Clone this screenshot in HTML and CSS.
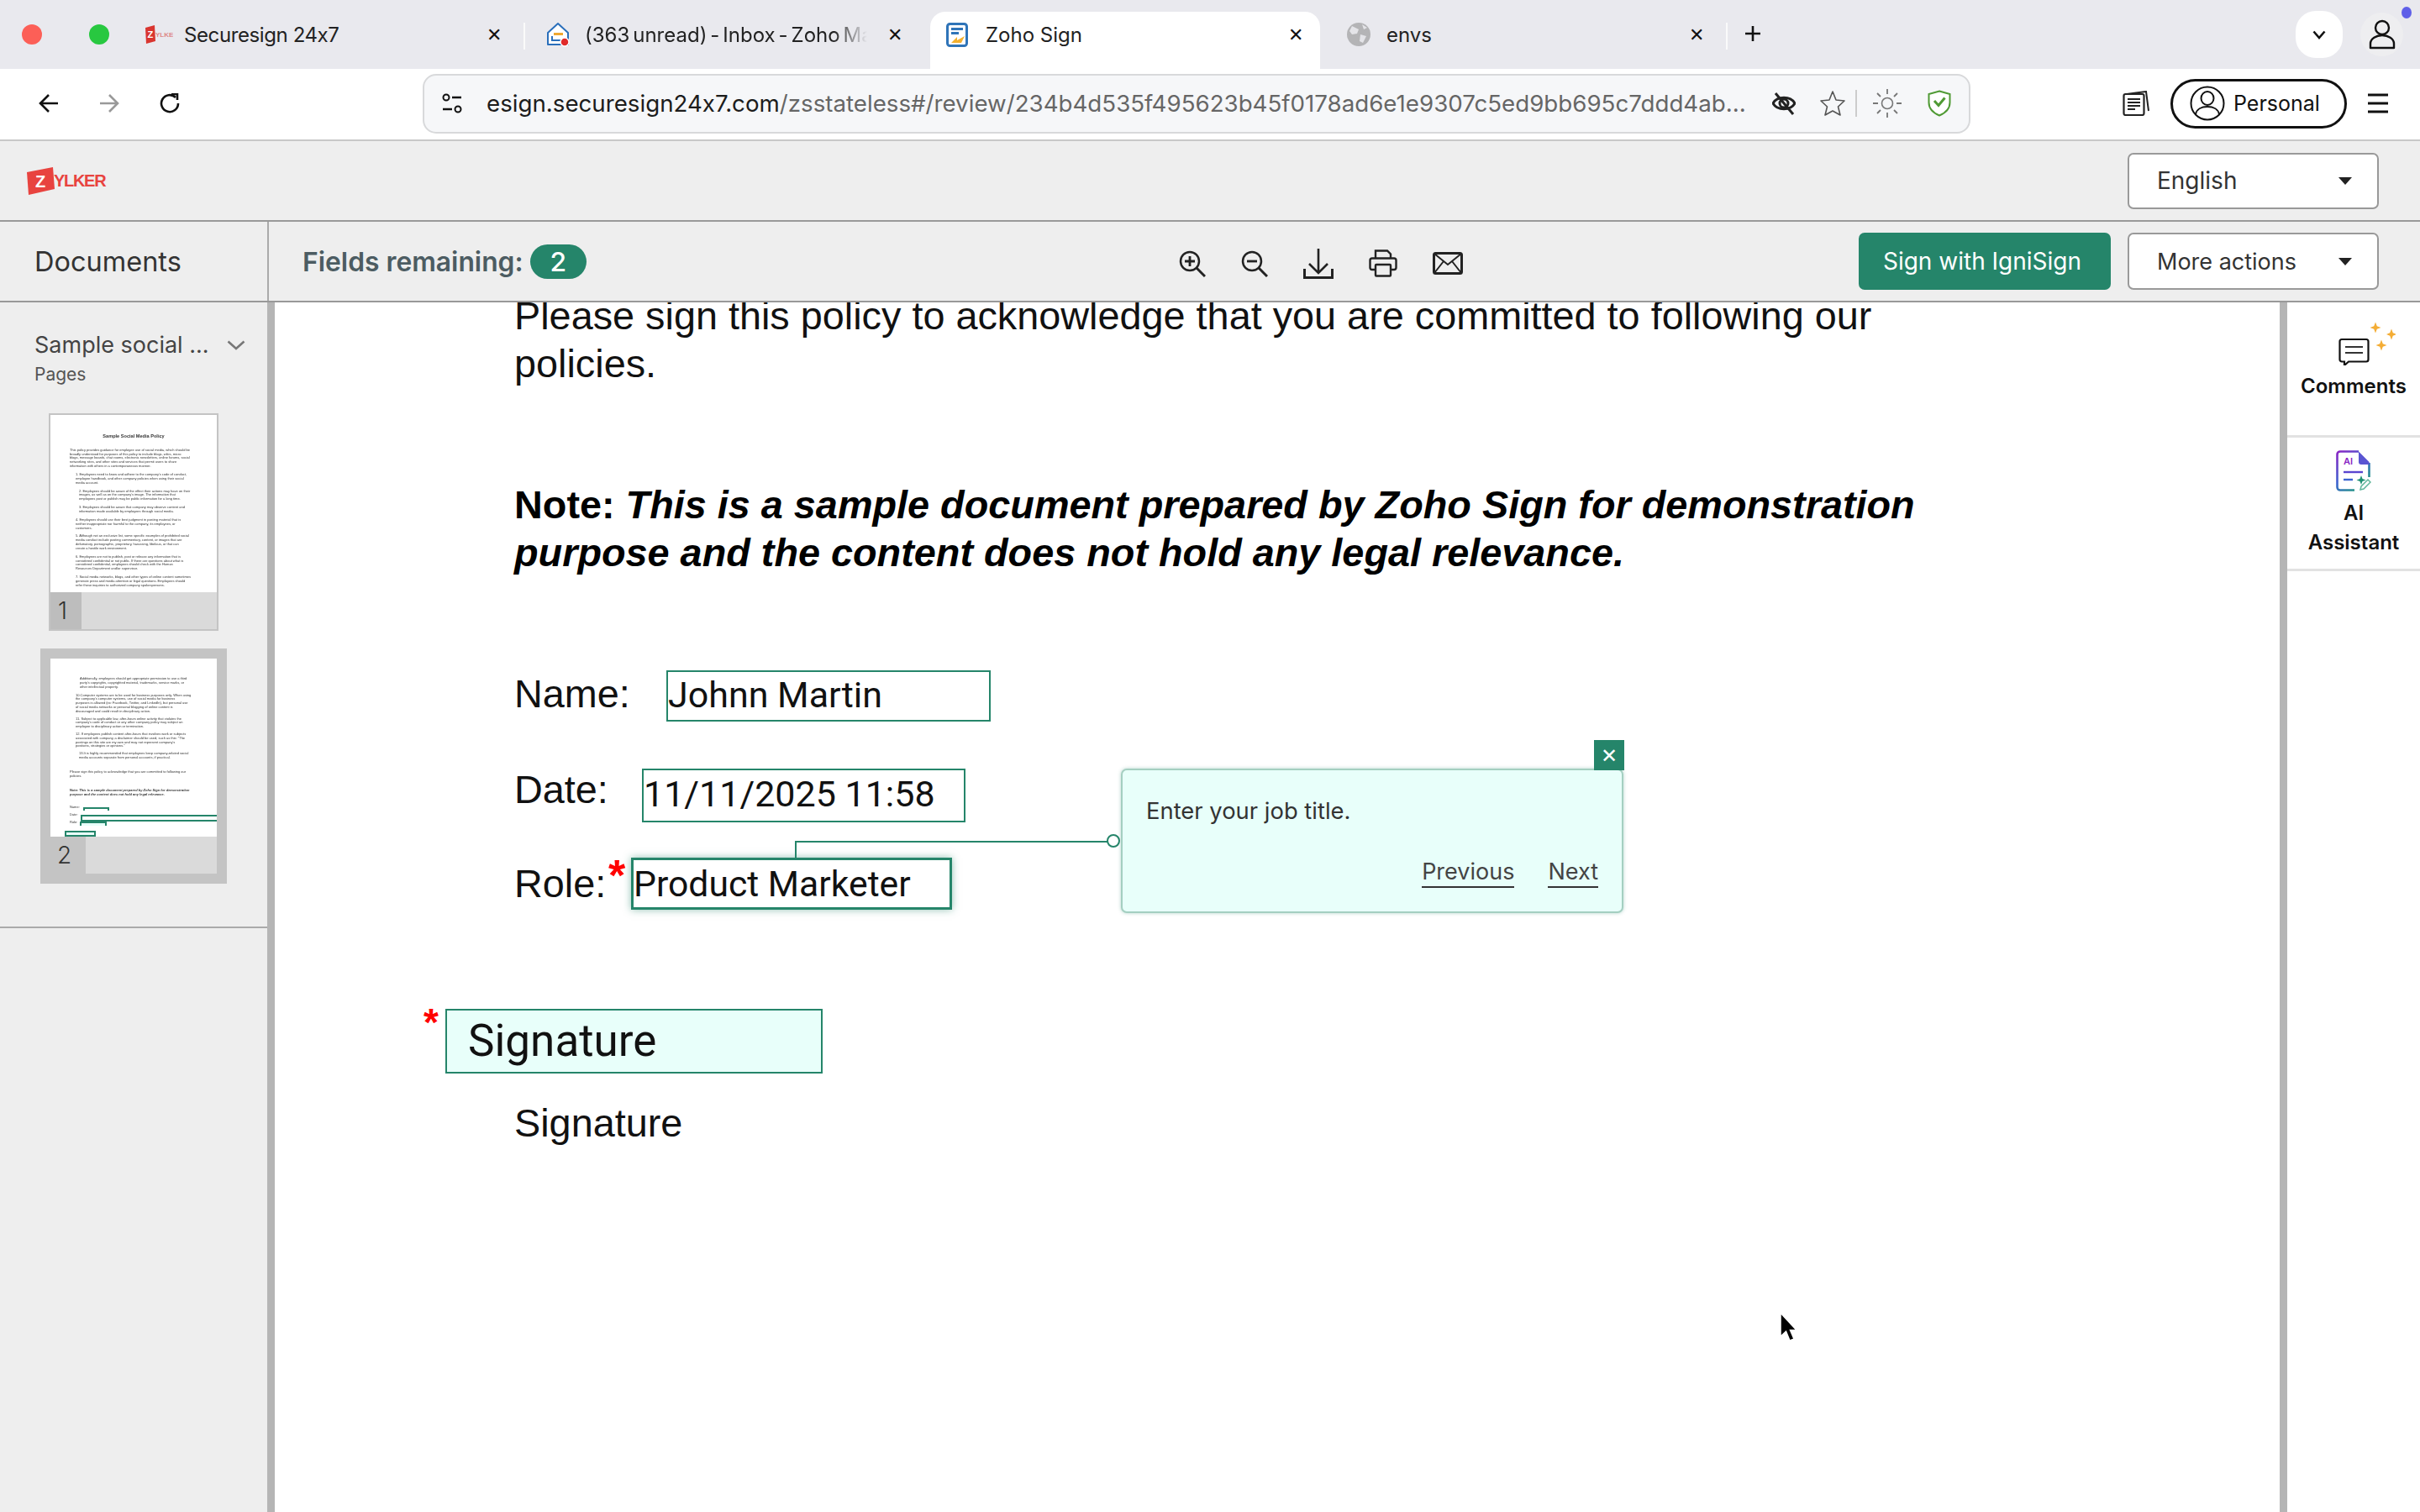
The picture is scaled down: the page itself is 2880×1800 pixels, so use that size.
FILE: index.html
```
<!DOCTYPE html>
<html lang="en">
<head>
  <meta charset="UTF-8">
  <meta name="viewport" content="width=device-width, initial-scale=1.0">
  <title>Zoho Sign</title>
  <link rel="stylesheet" href="styles.css">
</head>
<body>

  <!-- browser tabs -->
  <div class="tabstrip">
    <div class="lights">
      <span class="light red"></span>
      <span class="light green"></span>
    </div>
    <div class="tabs">
      <div class="tab sep">
        <span class="favicon">
          <svg width="34" height="22" viewBox="0 0 34 22"><path d="M1 3 L12 0 L13 19 L2 22 Z" fill="#d9352f"/><text x="3.5" y="15" font-size="11" font-weight="700" font-family="Liberation Sans" fill="#fff">Z</text><text x="13" y="14" font-size="8" font-weight="700" font-family="Liberation Sans" fill="#d88">YLKER</text></svg>
        </span>
        <span class="tab-title narrow">Securesign 24x7</span>
        <span class="tab-close">✕</span>
      </div>
      <div class="tab">
        <span class="favicon">
          <svg width="30" height="30" viewBox="0 0 30 30"><path d="M15 2 L27 13 V27 H3 V13 Z" fill="#fff" stroke="#2a6fbb" stroke-width="2" stroke-linejoin="round"/><rect x="10" y="13" width="11" height="3" fill="#f0a830"/><path d="M8 17v5h10" fill="none" stroke="#2a6fbb" stroke-width="2"/><circle cx="23" cy="24" r="5" fill="#e02b2b" stroke="#fff" stroke-width="1.5"/></svg>
        </span>
        <span class="tab-title fade">(363 unread) - Inbox - Zoho Mail</span>
        <span class="tab-close">✕</span>
      </div>
      <div class="tab active">
        <span class="favicon">
          <svg width="26" height="29" viewBox="0 0 26 29"><rect x="1.5" y="1.5" width="23" height="26" rx="3" fill="#fff" stroke="#2f74b8" stroke-width="3"/><rect x="6" y="6" width="14" height="3" fill="#2f74b8"/><rect x="6" y="11" width="9" height="3" fill="#2f74b8"/><path d="M6 24 L13 17 L13 21 L22 16 L18 24 Z" fill="#f2b02f"/></svg>
        </span>
        <span class="tab-title">Zoho Sign</span>
        <span class="tab-close">✕</span>
      </div>
      <div class="tab sep">
        <span class="favicon">
          <svg width="28" height="28" viewBox="0 0 28 28"><circle cx="14" cy="14" r="14" fill="#b4b4b6"/><path d="M6 4 L14 8 L12 13 L6 14 L3 10 Z M16 14 L23 16 L19 24 L15 22 Z M18 2 L24 6 L20 8 Z" fill="#e4e4e8"/></svg>
        </span>
        <span class="tab-title">envs</span>
        <span class="tab-close">✕</span>
      </div>
    </div>
    <svg class="new-tab" width="20" height="20" viewBox="0 0 20 20"><path d="M10 1V19M1 10H19" stroke="#111" stroke-width="2.6"/></svg>
    <div class="strip-right">
      <span class="tab-list">
        <svg width="16" height="11" viewBox="0 0 16 11"><path d="M1.5 1.5L8 9L14.5 1.5" fill="none" stroke="#111" stroke-width="2.6"/></svg>
      </span>
      <span class="account">
        <svg width="32" height="36" viewBox="0 0 32 36"><circle cx="16" cy="10" r="8" fill="none" stroke="#111" stroke-width="2.4"/><path d="M2 34 V29 C2 23 9 19 16 19 C23 19 30 23 30 29 V34 Z" fill="none" stroke="#111" stroke-width="2.4" stroke-linejoin="round"/></svg>
        <i class="account-dot"></i>
      </span>
    </div>
  </div>

  <!-- address bar -->
  <div class="toolbar">
    <svg class="nav-icon" width="24" height="24" viewBox="0 0 24 24"><path d="M23 12H3M12 2L2 12L12 22" fill="none" stroke="#111" stroke-width="2.6"/></svg>
    <svg class="nav-icon" width="24" height="24" viewBox="0 0 24 24"><path d="M1 12H21M12 2L22 12L12 22" fill="none" stroke="#999" stroke-width="2.6"/></svg>
    <svg class="nav-icon" width="24" height="24" viewBox="0 0 24 24"><path d="M19 5A10 10 0 1 0 22 12" fill="none" stroke="#111" stroke-width="2.6"/><path d="M14 1H21V8" fill="none" stroke="#111" stroke-width="2.6"/></svg>
    <div class="address">
      <svg class="tune" width="24" height="24" viewBox="0 0 24 24"><circle cx="5" cy="5" r="3.5" fill="none" stroke="#111" stroke-width="2"/><path d="M12 5H23M1 19H12" stroke="#111" stroke-width="2.4"/><circle cx="19" cy="19" r="3.5" fill="none" stroke="#111" stroke-width="2"/></svg>
      <span class="url">esign.securesign24x7.com<span class="url-path">/zsstateless#/review/234b4d535f495623b45f0178ad6e1e9307c5ed9bb695c7ddd4ab...</span></span>
      <svg class="eye" width="28" height="28" viewBox="0 0 28 28"><path d="M1 14C6 5 22 5 27 14C22 23 6 23 1 14Z" fill="none" stroke="#222" stroke-width="3"/><circle cx="14" cy="14" r="5" fill="none" stroke="#222" stroke-width="3"/><path d="M4 2L25 27" stroke="#222" stroke-width="3"/></svg>
      <svg class="star" width="32" height="32" viewBox="0 0 32 32"><path d="M16 2L20 12L30 13L22.5 20L25 30L16 25L7 30L9.5 20L2 13L12 12Z" fill="none" stroke="#555" stroke-width="1.6" stroke-linejoin="round"/></svg>
      <i class="address-sep"></i>
      <svg class="sun" width="36" height="36" viewBox="0 0 36 36"><circle cx="18" cy="18" r="6.5" fill="none" stroke="#777" stroke-width="1.6"/><path d="M18 1V7M18 29V35M1 18H7M29 18H35M6 6L10 10M26 26L30 30M6 30L10 26M26 10L30 6" stroke="#777" stroke-width="1.8"/></svg>
      <svg class="shield" width="28" height="32" viewBox="0 0 28 32"><path d="M14 1.5L26.5 5V15C26.5 23 20 28 14 30.5C8 28 1.5 23 1.5 15V5Z" fill="#fff" stroke="#4f9a34" stroke-width="2"/><path d="M8 13L13 18.5L20.5 9.5" fill="none" stroke="#4f9a34" stroke-width="3"/></svg>
    </div>
    <svg class="docs-icon" width="32" height="30" viewBox="0 0 32 30"><path d="M5 4L28 1L31 24" fill="none" stroke="#222" stroke-width="2"/><rect x="1.5" y="4" width="24" height="25" rx="2" fill="#fff" stroke="#222" stroke-width="2.2"/><path d="M6 10H21M6 14H21M6 18H21M6 22H15" stroke="#222" stroke-width="2"/></svg>
    <div class="profile">
      <svg width="42" height="42" viewBox="0 0 42 42"><circle cx="21" cy="21" r="19.5" fill="none" stroke="#111" stroke-width="2"/><ellipse cx="21" cy="15" rx="7.5" ry="8" fill="none" stroke="#111" stroke-width="2"/><path d="M7 34C8 28 14 25 21 25C28 25 34 28 35 34" fill="none" stroke="#111" stroke-width="2"/></svg>
      <span>Personal</span>
    </div>
    <svg class="hamburger" width="24" height="24" viewBox="0 0 24 24"><path d="M0 2H24M0 12H24M0 22H24" stroke="#111" stroke-width="3"/></svg>
  </div>

  <!-- app header -->
  <div class="brandbar">
    <svg class="logo" width="96" height="34" viewBox="0 0 96 34"><path d="M0 6L31 0L33 26L2 33Z" fill="#e8433f"/><text x="10" y="24" font-size="20" font-weight="700" font-family="Liberation Sans" fill="#fff">Z</text><text x="32" y="23" font-size="20" font-weight="700" font-family="Liberation Sans" letter-spacing="-1.3" fill="#e8433f">YLKER</text></svg>
    <div class="select">
      <span>English</span>
      <i class="caret"></i>
    </div>
  </div>

  <div class="actionbar">
    <div class="docs-title">Documents</div>
    <div class="fields-left">Fields remaining: <span class="badge">2</span></div>
    <div class="doc-tools">
      <svg width="32" height="32" viewBox="0 0 32 32"><circle cx="13" cy="13" r="11" fill="none" stroke="#222" stroke-width="2.5"/><path d="M21 21L31 31" stroke="#222" stroke-width="3"/><path d="M13 7V19M7 13H19" stroke="#222" stroke-width="2.8"/></svg>
      <svg width="32" height="32" viewBox="0 0 32 32"><circle cx="13" cy="13" r="11" fill="none" stroke="#222" stroke-width="2.5"/><path d="M21 21L31 31" stroke="#222" stroke-width="3"/><path d="M7 13H19" stroke="#222" stroke-width="2.8"/></svg>
      <svg width="36" height="36" viewBox="0 0 36 36"><path d="M18 0V28M7 18L18 29L29 18" fill="none" stroke="#222" stroke-width="2.6"/><path d="M1.5 24V34.5H34.5V24" fill="none" stroke="#222" stroke-width="3"/></svg>
      <svg width="34" height="33" viewBox="0 0 34 33"><path d="M8 11V1.5H22L26 5.5V11" fill="none" stroke="#222" stroke-width="2.4"/><path d="M8 24H4C2.5 24 1.5 23 1.5 21.5V13C1.5 11.5 2.5 10.5 4 10.5H30C31.5 10.5 32.5 11.5 32.5 13V21.5C32.5 23 31.5 24 30 24H26" fill="none" stroke="#222" stroke-width="2.4"/><rect x="8" y="18" width="18" height="13.5" rx="1" fill="none" stroke="#222" stroke-width="2.4"/></svg>
      <svg width="36" height="27" viewBox="0 0 36 27"><rect x="1.5" y="1.5" width="33" height="24" rx="2" fill="none" stroke="#222" stroke-width="3"/><path d="M2 2L18 15L34 2M2 25L13 11M34 25L23 11" fill="none" stroke="#222" stroke-width="2"/></svg>
    </div>
    <div class="sign-btn">Sign with IgniSign</div>
    <div class="select more">
      <span>More actions</span>
      <i class="caret"></i>
    </div>
  </div>

  <div class="workspace">
    <aside class="sidebar">
      <div class="doc-head">
        <div class="doc-name">
          <span>Sample social ...</span>
          <svg width="22" height="12" viewBox="0 0 22 12"><path d="M1.5 1.5L11 10L20.5 1.5" fill="none" stroke="#777" stroke-width="2.6"/></svg>
        </div>
        <div class="pages-label">Pages</div>
      </div>

      <div class="thumb">
        <div class="thumb-page">
          <div class="thumb-title">Sample Social Media Policy</div>
          <p class="t0">This policy provides guidance for employee use of social media, which should be<br>broadly understood for purposes of this policy to include blogs, wikis, micro<br>blogs, message boards, chat rooms, electronic newsletters, online forums, social<br>networking sites, and other sites and services that permit users to share<br>information with others in a contemporaneous manner.</p>
          <p class="t1">1. Employees need to know and adhere to the company's code of conduct,<br>employee handbook, and other company policies when using their social<br>media account.</p>
          <p class="t2">2. Employees should be aware of the effect their actions may have on their<br>images, as well as on the company's image. The information that<br>employees post or publish may be public information for a long time.</p>
          <p class="t2">3. Employees should be aware that company may observe content and<br>information made available by employees through social media.</p>
          <p class="t1">4. Employees should use their best judgment in posting material that is<br>neither inappropriate nor harmful to the company, its employees, or<br>customers.</p>
          <p class="t1">5. Although not an exclusive list, some specific examples of prohibited social<br>media conduct include posting commentary, content, or images that are<br>defamatory, pornographic, proprietary, harassing, libelous, or that can<br>create a hostile work environment.</p>
          <p class="t1">6. Employees are not to publish, post or release any information that is<br>considered confidential or not public. If there are questions about what is<br>considered confidential, employees should check with the Human<br>Resources Department and/or supervisor.</p>
          <p class="t1">7. Social media networks, blogs, and other types of online content sometimes<br>generate press and media attention or legal questions. Employees should<br>refer these inquiries to authorized company spokespersons.</p>
        </div>
        <div class="thumb-foot">
          <span class="thumb-num">1</span>
          <span class="thumb-rest"></span>
        </div>
      </div>

      <div class="thumb current">
        <div class="thumb-page">
          <p class="t3">Additionally, employees should get appropriate permission to use a third<br>party's copyrights, copyrighted material, trademarks, service marks, or<br>other intellectual property.</p>
          <p class="t1 tight">10.Computer systems are to be used for business purposes only. When using<br>the company's computer systems, use of social media for business<br>purposes is allowed (ex: Facebook, Twitter, and LinkedIn), but personal use<br>of social media networks or personal blogging of online content is<br>discouraged and could result in disciplinary action.</p>
          <p class="t1 tight">11. Subject to applicable law, after-hours online activity that violates the<br>company's code of conduct or any other company policy may subject an<br>employee to disciplinary action or termination.</p>
          <p class="t1 tight">12. If employees publish content after-hours that involves work or subjects<br>associated with company, a disclaimer should be used, such as this: "The<br>postings on this site are my own and may not represent company's<br>positions, strategies or opinions."</p>
          <p class="t2 tight">13.It is highly recommended that employees keep company-related social<br>media accounts separate from personal accounts, if practical.</p>
          <p class="t0 gap">Please sign this policy to acknowledge that you are committed to following our<br>policies.</p>
          <p class="t0 gap note"><b>Note: <i>This is a sample document prepared by Zoho Sign for demonstration<br>purpose and the content does not hold any legal relevance.</i></b></p>
          <p class="t0 mini-form">Name:<br><br>Date:<br><br>Role:</p>
          <i class="mini-field f1"></i>
          <i class="mini-field f2"></i>
          <i class="mini-field f3"></i>
          <i class="mini-field f4"></i>
        </div>
        <div class="thumb-foot">
          <span class="thumb-num">2</span>
          <span class="thumb-rest"></span>
        </div>
      </div>
    </aside>

    <i class="vbar"></i>

    <main class="page">
      <p class="pdf-text">Please sign this policy to acknowledge that you are committed to following our<br>policies.</p>
      <p class="pdf-text pdf-note"><b>Note: <i>This is a sample document prepared by Zoho Sign for demonstration<br>purpose and the content does not hold any legal relevance.</i></b></p>
      <p class="pdf-text label-name">Name:</p>
      <p class="pdf-text label-date">Date:</p>
      <p class="pdf-text label-role">Role:</p>
      <p class="pdf-text label-sign">Signature</p>

      <!-- fields sit on top of the pdf page -->
      <div class="field name-field">Johnn Martin</div>
      <div class="field date-field">11/11/2025 11:58</div>
      <div class="field role-field">Product Marketer</div>
      <span class="req role-req">*</span>
      <div class="connector"></div>
      <i class="connector-dot"></i>
      <div class="tip">
        <span class="tip-close">✕</span>
        <div class="tip-text">Enter your job title.</div>
        <div class="tip-nav">
          <a>Previous</a>
          <a>Next</a>
        </div>
      </div>
      <span class="req sign-req">*</span>
      <div class="field sign-field">Signature</div>

      <svg class="cursor" width="22" height="38" viewBox="0 0 22 38"><path d="M2 2V30L8.5 24L13 35L18 33L13.5 22.5H21Z" fill="#000" stroke="#fff" stroke-width="1.5"/></svg>
    </main>

    <i class="vbar"></i>

    <aside class="rightbar">
      <div class="side-item comments">
        <svg width="70" height="52" viewBox="0 -8 70 52"><path d="M6 13H35C36.5 13 37.5 14 37.5 15.5V37C37.5 38.5 36.5 39.5 35 39.5H14L9 44V39.5H6C4.5 39.5 3.5 38.5 3.5 37V15.5C3.5 14 4.5 13 6 13Z" fill="none" stroke="#111" stroke-width="2.2"/><path d="M10 22H31M10 29H31" stroke="#333" stroke-width="2"/><path d="M46 -7.5L47.8 -2.8L52.5 -1L47.8 .8L46 5.5L44.2 .8L39.5 -1L44.2 -2.8Z M65 .5L66.8 5.2L71 7L66.8 8.8L65 13.5L63.2 8.8L59 7L63.2 5.2Z M53 13.5L54.8 18.2L59.5 20L54.8 21.8L53 26.5L51.2 21.8L46.5 20L51.2 18.2Z" fill="#f4ad35"/></svg>
        <span>Comments</span>
      </div>
      <div class="side-item assistant">
        <svg width="42" height="50" viewBox="0 0 42 50">
          <defs>
            <linearGradient id="ai-grad" x1="0" y1="0" x2="0.7" y2="1">
              <stop offset="0" stop-color="#8a25c4"/>
              <stop offset="0.55" stop-color="#3c64d0"/>
              <stop offset="1" stop-color="#1f9a7c"/>
            </linearGradient>
          </defs>
          <path d="M27 1.5H5C3 1.5 1.5 3 1.5 5V44C1.5 46 3 47.5 5 47.5H22M39.5 32V15" fill="none" stroke="url(#ai-grad)" stroke-width="2.6"/>
          <path d="M27 1.5L39.5 14V17H30C28 17 27 16 27 14Z" fill="#5a55d2"/>
          <text x="9" y="17" font-size="11" font-family="Inter" fill="#8a25c4">AI</text>
          <path d="M9 26H32" stroke="#5a45d0" stroke-width="2.4"/>
          <path d="M9 35H20" stroke="#3c64d0" stroke-width="2.4"/>
          <path d="M30 30L31.5 34L35.5 35.5L31.5 37L30 41L28.5 37L24.5 35.5L28.5 34Z" fill="#1f8f72"/>
          <path d="M29 47L30 43L38 35L41 38L33 46Z" fill="#fff" stroke="#5fb59b" stroke-width="1.5"/>
        </svg>
        <span class="ai">AI</span>
        <span>Assistant</span>
      </div>
    </aside>
  </div>

</body>
</html>
```
FILE: styles.css
```
* {
  margin: 0;
  padding: 0;
  box-sizing: border-box;
}

body {
  width: 2880px;
  height: 1800px;
  overflow: hidden;
  background: #fff;
  font-family: 'Inter', sans-serif;
  font-feature-settings: 'calt' 0;
  color: #222;
}

svg {
  display: block;
  flex: none;
}

/* tab strip */
.tabstrip {
  height: 82px;
  background: #e9e9ee;
  display: flex;
  align-items: flex-end;
  position: relative;
}

.lights {
  width: 153px;
  height: 82px;
  padding-left: 26px;
  display: flex;
  align-items: center;
  gap: 56px;
  flex: none;
}

.light {
  width: 24px;
  height: 24px;
  border-radius: 50%;
}

.light.red { background: #fc5f57; }
.light.green { background: #28c840; }

.tabs {
  display: flex;
  gap: 13px;
  flex: none;
}

.tab {
  width: 464px;
  height: 68px;
  padding: 0 20px 14px 19px;
  display: flex;
  align-items: center;
  position: relative;
  font-size: 24px;
  color: #222;
}

.tab.sep::after {
  content: '';
  position: absolute;
  right: -8px;
  top: 13px;
  width: 2px;
  height: 32px;
  background: #fafafa;
}

.tab.active {
  background: #fff;
  border-radius: 18px 18px 0 0;
}

.favicon {
  width: 47px;
  display: flex;
  flex: none;
}

.tab-title {
  flex: 1;
  white-space: nowrap;
  overflow: hidden;
}

.tab-title.narrow {
  letter-spacing: -0.4px;
}

.tab-title.fade {
  flex: none;
  width: 336px;
  word-spacing: -2.8px;
  -webkit-mask-image: linear-gradient(to right, #000 88%, transparent);
  mask-image: linear-gradient(to right, #000 88%, transparent);
}

.tab-close {
  margin-left: auto;
  font-size: 22px;
  color: #111;
  line-height: 1;
}

.new-tab {
  margin: 0 0 32px 28px;
}

.strip-right {
  margin-left: auto;
  height: 82px;
  padding-right: 20px;
  display: flex;
  align-items: center;
  gap: 21px;
}

.tab-list {
  width: 56px;
  height: 56px;
  border-radius: 24px;
  background: #fff;
  display: flex;
  align-items: center;
  justify-content: center;
}

.account {
  width: 51px;
  height: 52px;
  border-radius: 50%;
  background: #eeeef0;
  display: flex;
  align-items: center;
  justify-content: center;
  position: relative;
}

.account-dot {
  position: absolute;
  top: -7px;
  right: -10px;
  width: 12px;
  height: 14px;
  border-radius: 50%;
  background: #5f5fe8;
}

/* address bar */
.toolbar {
  height: 86px;
  padding: 0 38px 2px 46px;
  background: #fff;
  border-bottom: 2px solid #c8c8c8;
  border-radius: 14px 14px 0 0;
  display: flex;
  align-items: center;
}

.nav-icon {
  margin-right: 48px;
}

.address {
  width: 1842px;
  height: 71px;
  margin-left: 241px;
  padding: 0 21px;
  background: #f6f7f9;
  border: 2px solid #d8d9db;
  border-radius: 16px;
  display: flex;
  align-items: center;
}

.tune {
  margin-right: 29px;
}

.url {
  flex: 1;
  min-width: 0;
  font-size: 27.7px;
  color: #1c1c1c;
  white-space: nowrap;
  overflow: hidden;
}

.url-path {
  color: #666;
}

.star { margin-left: 28px; }
.sun { margin-left: 18px; }
.shield { margin-left: 30px; }

.address-sep {
  width: 2px;
  height: 32px;
  margin-left: 11px;
  background: #ccc;
}

.docs-icon {
  margin-left: 181px;
}

.profile {
  width: 210px;
  height: 59px;
  margin-left: 25px;
  padding-left: 20px;
  border: 3px solid #111;
  border-radius: 30px;
  display: flex;
  align-items: center;
  gap: 10px;
  font-size: 25px;
  color: #111;
}

.hamburger {
  margin-left: 25px;
}

/* app header */
.brandbar {
  height: 96px;
  padding: 0 49px 0 32px;
  background: #eee;
  border-bottom: 2px solid #999;
  display: flex;
  align-items: center;
  justify-content: space-between;
}

.logo {
  margin-top: 2px;
}

.select {
  width: 299px;
  height: 67px;
  padding: 0 30px 0 33px;
  background: #fff;
  border: 2px solid #999;
  border-radius: 7px;
  display: flex;
  align-items: center;
  justify-content: space-between;
  font-size: 28px;
  color: #333;
}

.caret {
  width: 0;
  height: 0;
  border-left: 8px solid transparent;
  border-right: 8px solid transparent;
  border-top: 9px solid #222;
}

.actionbar {
  height: 96px;
  padding-right: 49px;
  background: #eee;
  border-bottom: 2px solid #999;
  display: flex;
  align-items: center;
}

.docs-title {
  width: 320px;
  height: 94px;
  padding-left: 41px;
  border-right: 2px solid #aaa;
  display: flex;
  align-items: center;
  font-size: 32.5px;
  color: #333;
  flex: none;
}

.fields-left {
  margin-left: 40px;
  display: flex;
  align-items: center;
  font-size: 31.8px;
  font-weight: 600;
  color: #4c5c62;
  white-space: pre;
  width: 337px;
}

.badge {
  width: 67px;
  height: 41px;
  border-radius: 21px;
  background: #25856a;
  color: #fff;
  display: flex;
  align-items: center;
  justify-content: center;
  flex: none;
  font-weight: 500;
}

.doc-tools {
  margin: 5px 0 0 706px;
  display: flex;
  align-items: center;
  gap: 42px;
}

.sign-btn {
  width: 300px;
  height: 68px;
  margin-left: auto;
  margin-right: 20px;
  padding-right: 6px;
  border-radius: 7px;
  background: #25856a;
  color: #fff;
  display: flex;
  align-items: center;
  justify-content: center;
  font-size: 28px;
}

.select.more {
  height: 68px;
  font-size: 27px;
}

/* main area */
.workspace {
  height: 1440px;
  display: flex;
}

.vbar {
  width: 9px;
  background: #b5b5b5;
  flex: none;
}

.sidebar {
  width: 318px;
  flex: none;
  background: #eee;
  display: flex;
  flex-direction: column;
  align-items: flex-start;
}

.doc-head {
  width: 100%;
  padding: 34px 26px 0 41px;
  height: 132px;
}

.doc-name {
  display: flex;
  align-items: center;
  justify-content: space-between;
  font-size: 27px;
  color: #444;
  line-height: 34px;
}

.pages-label {
  margin-top: 5px;
  font-size: 21px;
  color: #555;
}

.thumb {
  width: 202px;
  margin-left: 58px;
  padding: 2px;
  background: #c4c4c4;
}

.thumb.current {
  width: 222px;
  height: 280px;
  margin: 21px 0 0 48px;
  padding: 12px;
}

.thumb-page {
  height: 211px;
  padding-top: 23px;
  background: #fff;
  position: relative;
  font-family: 'Liberation Sans', sans-serif;
  font-size: 4px;
  line-height: 4.8px;
  color: #333;
  white-space: nowrap;
  filter: blur(0.3px);
}

.thumb.current .thumb-page {
  height: 212px;
  padding-top: 22px;
}

.thumb-title {
  text-align: center;
  font-size: 5.6px;
  font-weight: 700;
  margin-bottom: 12px;
}

.thumb-page p {
  margin-bottom: 5.2px;
}

.t0 { padding-left: 23px; }
.t1 { padding-left: 30px; }
.t2 { padding-left: 34px; }
.t3 { padding-left: 35px; }
.thumb-page p.tight { margin-bottom: 4px; }
.thumb-page p.gap { margin-top: 12px; }
.thumb-page p.note { margin-top: 13px; }
.thumb-page p.mini-form { margin-top: 10px; line-height: 4.4px; }

.mini-field {
  position: absolute;
  border: 2px solid #25856a;
  background: #fff;
}

.mini-field.f1 { left: 39px; top: 177px; width: 31px; height: 4px; border-bottom: 0; }
.mini-field.f2 { left: 36px; top: 186px; width: 162px; height: 8px; border-right: 0; }
.mini-field.f3 { left: 35px; top: 194px; width: 32px; height: 5px; border-bottom: 0; background: #e8fffa; }
.mini-field.f4 { left: 17px; top: 205px; width: 37px; height: 7px; background: #e8fffa; }

.thumb-foot {
  height: 44px;
  display: flex;
}

.thumb-num {
  width: 37px;
  background: #bdbdbd;
  display: flex;
  align-items: center;
  padding-left: 9px;
  font-size: 28px;
  font-weight: 300;
  color: #333;
}

.thumb-rest {
  flex: 1;
  background: #dadada;
}

.thumb.current .thumb-num {
  width: 42px;
  background: none;
  padding-left: 8px;
}

.sidebar::after {
  content: '';
  width: 100%;
  height: 2px;
  margin-top: 51px;
  background: #aaa;
}

/* document page */
.page {
  flex: 1;
  min-width: 0;
  position: relative;
  overflow: hidden;
  background: #fff;
  padding: 0 0 0 285px;
}

.pdf-text {
  font-family: 'Liberation Sans', sans-serif;
  font-size: 46.8px;
  line-height: 57px;
  color: #111;
  white-space: nowrap;
}

.pdf-text:first-child { margin-top: -12px; }
.pdf-note { margin-top: 110.5px; color: #000; }
.label-name { margin-top: 111px; }
.label-date { margin-top: 57px; }
.label-role { margin-top: 55px; }
.label-sign { margin-top: 228px; }

.field {
  position: absolute;
  border: 2px solid #25856a;
  background: #fff;
  display: flex;
  align-items: center;
  padding: 0 0 4px 0;
  font-family: 'Roboto', sans-serif;
  font-size: 43px;
  color: #111;
  white-space: nowrap;
}

.name-field { left: 466px; top: 438px; width: 386px; height: 61px; }
.date-field { left: 437px; top: 555px; width: 385px; height: 64px; }

.role-field {
  left: 424px;
  top: 661px;
  width: 382px;
  height: 62px;
  padding-bottom: 0;
  border-width: 3px;
  font-size: 42.7px;
  box-shadow: 0 0 9px rgba(37, 133, 106, .5);
}

.sign-field {
  left: 203px;
  top: 841px;
  width: 449px;
  height: 77px;
  padding: 0 0 1px 25px;
  background: #e8fffa;
  font-size: 53px;
}

.req {
  position: absolute;
  font-family: 'Liberation Sans', sans-serif;
  font-weight: 700;
  color: #f00;
  line-height: 1;
}

.role-req { left: 397px; top: 656px; font-size: 52px; }
.sign-req { left: 177px; top: 834px; font-size: 46px; }

.connector {
  position: absolute;
  left: 619px;
  top: 641px;
  width: 372px;
  height: 20px;
  border-top: 2px solid #25856a;
  border-left: 2px solid #25856a;
}

.connector-dot {
  position: absolute;
  left: 990px;
  top: 633px;
  width: 16px;
  height: 16px;
  border-radius: 50%;
  border: 2px solid #25856a;
  background: #fff;
}

.tip {
  position: absolute;
  left: 1007px;
  top: 555px;
  width: 598px;
  height: 172px;
  padding: 31px 28px 0;
  background: #e8fffa;
  border: 2px solid #a4cfc1;
  border-radius: 7px;
  box-shadow: 0 0 4px rgba(37, 133, 106, .35);
}

.tip-close {
  position: absolute;
  right: -3px;
  top: -36px;
  width: 36px;
  height: 36px;
  background: #25856a;
  color: #fff;
  font-size: 24px;
  display: flex;
  align-items: center;
  justify-content: center;
}

.tip-text {
  font-size: 27.4px;
  color: #333;
}

.tip-nav {
  margin-top: 39px;
  display: flex;
  justify-content: flex-end;
  gap: 40px;
  font-size: 27px;
  color: #444;
}

.tip-nav a {
  border-bottom: 2px solid #333;
  line-height: 34px;
}

.cursor {
  position: absolute;
  left: 1790px;
  top: 1201px;
}

/* right rail */
.rightbar {
  width: 158px;
  flex: none;
  background: #fff;
  display: flex;
  flex-direction: column;
}

.side-item {
  display: flex;
  flex-direction: column;
  align-items: center;
  border-bottom: 3px solid #e2e2e2;
  font-size: 24px;
  font-weight: 600;
  color: #111;
}

.comments {
  height: 161px;
  padding-top: 23px;
  gap: 10px;
}

.comments svg {
  margin-left: 30px;
}

.assistant {
  height: 159px;
  padding-top: 15px;
  line-height: 35px;
}

.assistant svg {
  margin-bottom: 7px;
}

.ai {
  font-size: 24px;
}
```
